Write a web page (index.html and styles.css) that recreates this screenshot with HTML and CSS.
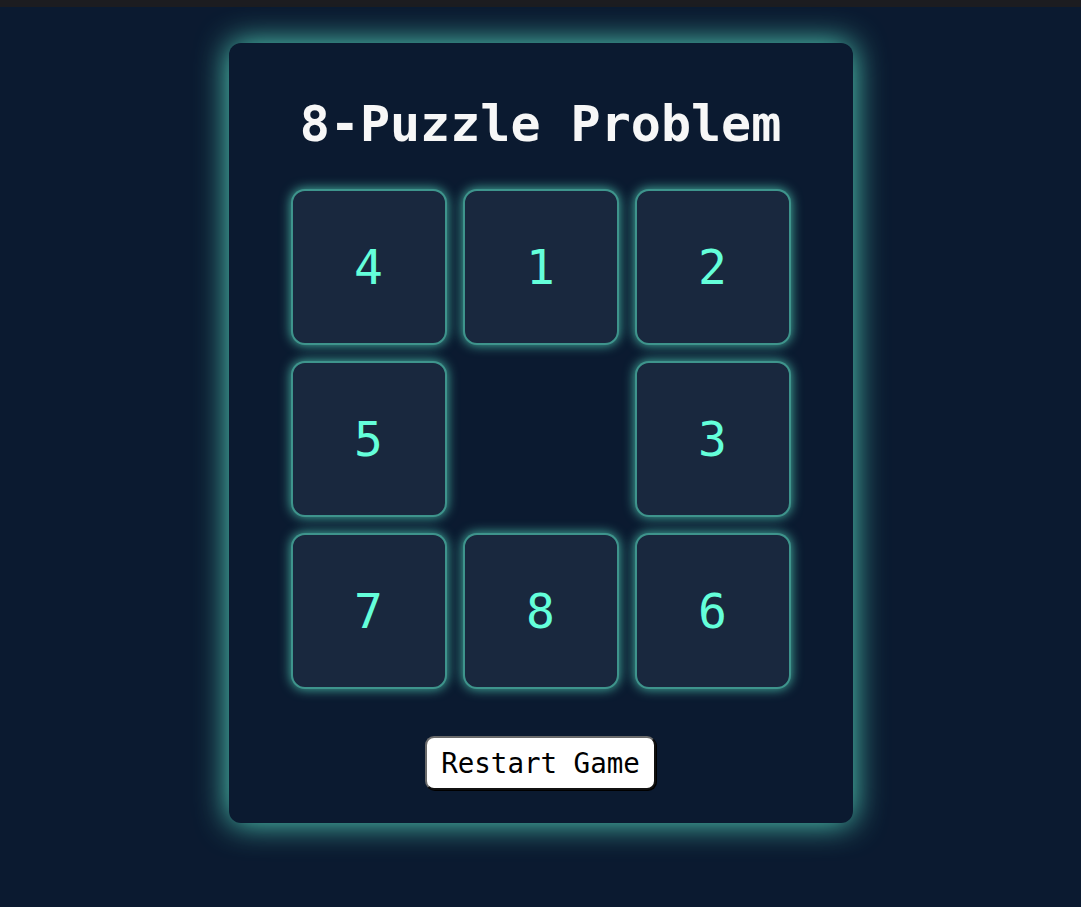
FILE: index.html
```html
<!DOCTYPE html>
<html>
<head>
<meta charset="utf-8">
<title>8-Puzzle Problem</title>
<link rel="stylesheet" href="styles.css">
</head>
<body>
<div class="topbar"></div>
<main class="page">
  <section class="card">
    <h1 class="title">8-Puzzle Problem</h1>
    <div class="grid">
      <div class="tile">4</div>
      <div class="tile">1</div>
      <div class="tile">2</div>
      <div class="tile">5</div>
      <div class="tile empty"></div>
      <div class="tile">3</div>
      <div class="tile">7</div>
      <div class="tile">8</div>
      <div class="tile">6</div>
    </div>
    <button class="restart">Restart Game</button>
  </section>
</main>
</body>
</html>
```
FILE: styles.css
```css
html, body {
  margin: 0;
  padding: 0;
  background: #0b1a30;
  height: 100%;
}
body {
  font-family: "DejaVu Sans Mono", "Liberation Mono", monospace;
}
.topbar {
  height: 7px;
  background: #1c1c20;
}
.page {
  display: flex;
  justify-content: center;
  padding-top: 36px;
}
.card {
  width: 624px;
  height: 780px;
  box-sizing: border-box;
  background: #0b1a30;
  border-radius: 12px;
  box-shadow: 0 0 32px rgba(100, 255, 218, 0.85);
  padding-top: 51px;
  display: flex;
  flex-direction: column;
  align-items: center;
}
.title {
  margin: 0;
  font-size: 50px;
  line-height: 60px;
  font-weight: bold;
  color: #f7f7f7;
}
.grid {
  margin-top: 35px;
  display: grid;
  grid-template-columns: repeat(3, 156px);
  grid-auto-rows: 156px;
  gap: 16px;
}
.tile {
  box-sizing: border-box;
  background: #19283e;
  border: 2px solid rgba(100, 255, 218, 0.5);
  border-radius: 14px;
  box-shadow: 0 0 12px rgba(100, 255, 218, 0.7);
  display: flex;
  align-items: center;
  justify-content: center;
  font-size: 48px;
  color: #64ffda;
}
.tile.empty {
  background: transparent;
  border: none;
  box-shadow: none;
}
.restart {
  margin-top: 47px;
  font-family: "DejaVu Sans Mono", "Liberation Mono", monospace;
  font-size: 27.5px;
  line-height: 32px;
  padding: 9px 14px;
  background: #fff;
  color: #000;
  border: 2px solid;
  border-color: #6b6b6b #111 #111 #6b6b6b;
  border-radius: 9px;
  box-shadow: 1px 1px 0 #000;
}
```
